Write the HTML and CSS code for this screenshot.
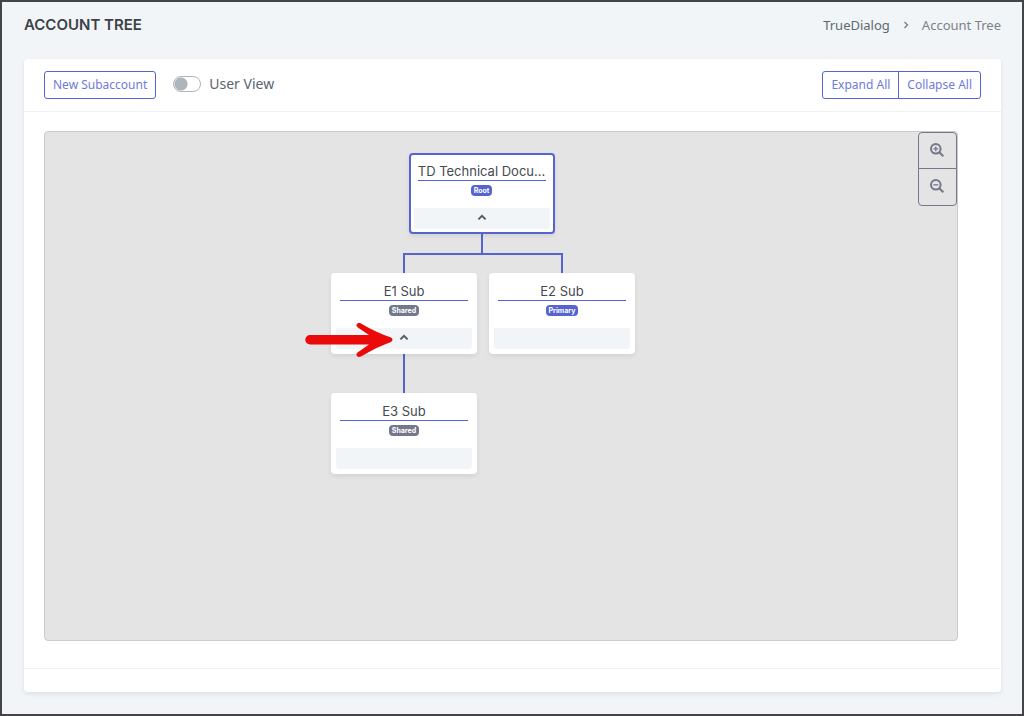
FILE: index.html
```html
<!DOCTYPE html>
<html lang="en">
<head>
<meta charset="utf-8">
<meta name="viewport" content="width=device-width, initial-scale=1">
<title>Account Tree</title>
<link rel="stylesheet" href="styles.css">
</head>
<body class="page">
  <header class="page-header">
    <h1 class="page-title">ACCOUNT TREE</h1>
    <nav class="breadcrumb" aria-label="Breadcrumb">
      <a class="breadcrumb-link" href="#">TrueDialog</a>
      <svg class="breadcrumb-sep" viewBox="0 0 6 8" aria-hidden="true"><path d="M1.5 1l3 3-3 3"/></svg>
      <span class="breadcrumb-current">Account Tree</span>
    </nav>
  </header>
  <main class="card">
    <div class="toolbar">
      <button class="btn" type="button">New Subaccount</button>
      <label class="switch" for="user-view">
        <input class="switch-input" type="checkbox" id="user-view">
        <span>User View</span>
      </label>
      <div class="btn-group">
        <button class="btn" type="button">Expand All</button>
        <button class="btn" type="button">Collapse All</button>
      </div>
    </div>
    <div class="card-body">
      <div class="canvas">
        <div class="tree">
          <article class="node node-root">
            <h2 class="node-name">TD Technical Docu...</h2>
            <span class="badge badge-primary">Root</span>
            <button class="node-toggle" type="button" aria-label="Collapse">
              <svg class="chevron" viewBox="0 0 10 7" aria-hidden="true"><path d="M1.4 5.4L5 1.8l3.6 3.6"/></svg>
            </button>
          </article>
          <div class="stem"></div>
          <div class="children">
            <div class="branch branch-first">
              <article class="node">
                <h2 class="node-name">E1 Sub</h2>
                <span class="badge badge-shared">Shared</span>
                <button class="node-toggle" type="button" aria-label="Collapse">
                  <svg class="chevron" viewBox="0 0 10 7" aria-hidden="true"><path d="M1.4 5.4L5 1.8l3.6 3.6"/></svg>
                </button>
                <svg class="pointer" viewBox="0 0 90 36" aria-hidden="true">
                  <path d="M6 13H65L53.500 5.200C51 3 53.500 0 57 1.500C67 7.500 77 12 87 15.500Q90 17.500 87 20C77 23.500 67 28.500 57 34.500C53.500 36 51 33 53.500 30.500L65 22.500H6A4.750 4.750 0 0 1 6 13Z"/>
                </svg>
              </article>
              <div class="stem stem-long"></div>
              <article class="node">
                <h2 class="node-name">E3 Sub</h2>
                <span class="badge badge-shared">Shared</span>
                <div class="node-toggle"></div>
              </article>
            </div>
            <div class="branch branch-last">
              <article class="node">
                <h2 class="node-name">E2 Sub</h2>
                <span class="badge badge-primary">Primary</span>
                <div class="node-toggle"></div>
              </article>
            </div>
          </div>
        </div>
        <div class="zoom">
          <button class="zoom-btn" type="button" aria-label="Zoom in">
            <svg class="zoom-icon" viewBox="0 0 14 14" aria-hidden="true"><circle cx="5.800" cy="5.800" r="4.800"/><path d="M9.300 9.300l4 4"/><path class="thin" d="M5.800 3.400v4.800M3.400 5.800h4.800"/></svg>
          </button>
          <button class="zoom-btn" type="button" aria-label="Zoom out">
            <svg class="zoom-icon" viewBox="0 0 14 14" aria-hidden="true"><circle cx="5.800" cy="5.800" r="4.800"/><path d="M9.300 9.300l4 4"/><path class="thin" d="M3.400 5.800h4.800"/></svg>
          </button>
        </div>
      </div>
    </div>
    <footer class="card-footer"></footer>
  </main>
</body>
</html>
```
FILE: styles.css
```css
* {
  box-sizing: border-box;
}

.page {
  --accent: #5664d2;
  --muted: #74788d;
  display: flex;
  flex-direction: column;
  min-height: 100vh;
  margin: 0;
  padding: 12px 21px 22px 22px;
  border: 2px solid #444446;
  background: #f1f5f7;
  color: #5a646e;
  font-family: "Noto Sans", "Open Sans", sans-serif;
  font-size: 13px;
}

.page-header {
  display: flex;
  align-items: center;
  justify-content: space-between;
  height: 22px;
  margin-bottom: 23px;
}

.page-title {
  margin: 0;
  color: #3c4248;
  font: 600 15px/22px Inter, sans-serif;
}

.breadcrumb {
  display: flex;
  align-items: center;
  gap: 13px;
  line-height: 22px;
}

.breadcrumb-link {
  color: #5f6971;
  text-decoration: none;
}

.breadcrumb-current {
  color: #7c8289;
}

.breadcrumb-sep {
  width: 6px;
  height: 8px;
  fill: none;
  stroke: var(--muted);
  stroke-width: 1.3;
}

.card {
  display: flex;
  flex: 1;
  flex-direction: column;
  border-radius: 4px;
  background: #fff;
  box-shadow: 0 2px 4px rgba(0, 0, 0, 0.08);
}

.toolbar {
  display: flex;
  align-items: center;
  padding: 12px 20px;
  border-bottom: 1px solid #eff2f4;
}

.btn {
  height: 28px;
  padding: 0 8px;
  border: 1px solid var(--accent);
  border-radius: 3px;
  background: #fff;
  color: #6f7bd9;
  font: 12px/18px "Noto Sans", "Open Sans", sans-serif;
}

.switch {
  display: flex;
  align-items: center;
  gap: 8px;
  margin: 0 0 3px 17px;
  font-size: 14px;
}

.switch-input {
  width: 28px;
  height: 16px;
  margin: 0;
  border: 1px solid #adb5bd;
  border-radius: 8px;
  appearance: none;
  background: radial-gradient(circle at 7px 7px, #adb5bd 6px, #fff 7px);
}

.btn-group {
  display: flex;
  margin-left: auto;
}

.btn-group .btn:first-child {
  border-radius: 3px 0 0 3px;
}

.btn-group .btn:last-child {
  margin-left: -1px;
  border-radius: 0 3px 3px 0;
}

.card-body {
  display: flex;
  flex: 1;
  padding: 19px 43px 27px 20px;
}

.canvas {
  display: flex;
  flex: 1;
  align-items: flex-start;
  border: 1px solid #cbcbcb;
  border-radius: 4px;
  background: #e4e4e4;
}

.card-footer {
  height: 24px;
  border-top: 1px solid #f1f3f5;
}

.tree {
  display: flex;
  flex: 1;
  flex-direction: column;
  align-items: center;
  padding-top: 21px;
}

.node {
  position: relative;
  display: flex;
  flex-direction: column;
  align-items: center;
  width: 146px;
  height: 81px;
  padding: 3px;
  border: 2px solid #fff;
  border-radius: 4px;
  background: #fff;
  box-shadow: 0 2px 4px rgba(0, 0, 0, 0.08);
}

.node-root {
  border-color: var(--accent);
}

.node-name {
  align-self: stretch;
  margin: 0 4px;
  padding-top: 5px;
  border-bottom: 1px solid var(--accent);
  color: #444a50;
  font: 13px/17px Inter, sans-serif;
  text-align: center;
  white-space: nowrap;
}

.badge {
  height: 11px;
  margin-top: 4px;
  padding: 0 3px;
  border-radius: 4px;
  color: #fff;
  font: 700 7px/11px Inter, sans-serif;
}

.badge-primary {
  background: var(--accent);
}

.badge-shared {
  background: var(--muted);
}

.node-toggle {
  display: flex;
  align-items: center;
  align-self: stretch;
  justify-content: center;
  height: 21px;
  margin-top: auto;
  padding: 0 0 2px;
  border: 0;
  border-radius: 0 0 3px 3px;
  background: #f1f5f7;
}

.chevron {
  width: 10px;
  height: 7px;
  fill: none;
  stroke: #505d69;
  stroke-width: 2;
}

.stem {
  width: 2px;
  height: 19px;
  background: var(--accent);
}

.stem-long {
  height: 39px;
}

.children {
  display: flex;
  align-items: flex-start;
  padding-left: 3px;
}

.branch {
  position: relative;
  display: flex;
  flex-direction: column;
  align-items: center;
  padding-top: 20px;
}

.branch-first {
  padding-right: 12px;
}

/* Elbow connector from the parent's stem to each child */
.branch::before {
  position: absolute;
  top: 0;
  height: 20px;
  border: 0 solid var(--accent);
  border-top-width: 2px;
  content: "";
}

.branch-first::before {
  right: 0;
  left: 72px;
  border-left-width: 2px;
}

.branch-last::before {
  right: 72px;
  left: 0;
  border-right-width: 2px;
}

.pointer {
  position: absolute;
  top: 47px;
  left: -29px;
  width: 90px;
  height: 36px;
  fill: #ea0a0a;
  pointer-events: none;
}

.zoom {
  display: flex;
  flex-direction: column;
}

.zoom-btn {
  display: flex;
  align-items: center;
  justify-content: center;
  width: 39px;
  height: 37px;
  padding: 0 1px 2px 0;
  border: 1px solid var(--muted);
  border-radius: 4px 4px 0 0;
  background: transparent;
}

.zoom-btn + .zoom-btn {
  height: 38px;
  margin-top: -1px;
  border-radius: 0 0 4px 4px;
}

.zoom-icon {
  width: 14px;
  height: 14px;
  fill: none;
  stroke: var(--muted);
  stroke-width: 2;
}

.thin {
  stroke-width: 1.3;
}
```
